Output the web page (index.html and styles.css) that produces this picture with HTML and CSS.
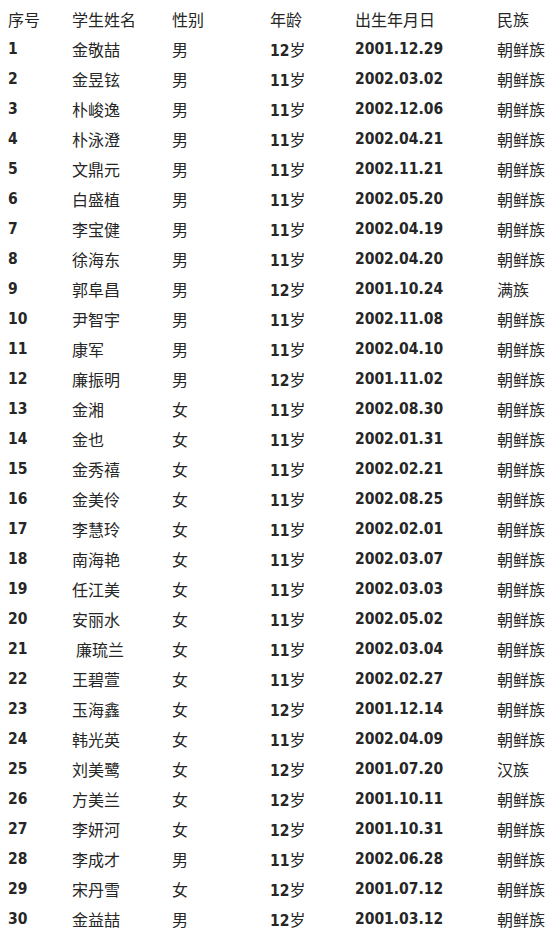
FILE: index.html
```html
<!DOCTYPE html>
<html lang="zh">
<head>
<meta charset="utf-8">
<link rel="stylesheet" href="styles.css">
</head>
<body>
<div class="table">
  <div class="row head"><span>序号</span><span>学生姓名</span><span>性别</span><span>年龄</span><span>出生年月日</span><span>民族</span></div>
  <div class="row"><b>1</b><span>金敬喆</span><span>男</span><span><b>12</b>岁</span><b>2001.12.29</b><span>朝鲜族</span></div>
  <div class="row"><b>2</b><span>金昱铉</span><span>男</span><span><b>11</b>岁</span><b>2002.03.02</b><span>朝鲜族</span></div>
  <div class="row"><b>3</b><span>朴峻逸</span><span>男</span><span><b>11</b>岁</span><b>2002.12.06</b><span>朝鲜族</span></div>
  <div class="row"><b>4</b><span>朴泳澄</span><span>男</span><span><b>11</b>岁</span><b>2002.04.21</b><span>朝鲜族</span></div>
  <div class="row"><b>5</b><span>文鼎元</span><span>男</span><span><b>11</b>岁</span><b>2002.11.21</b><span>朝鲜族</span></div>
  <div class="row"><b>6</b><span>白盛植</span><span>男</span><span><b>11</b>岁</span><b>2002.05.20</b><span>朝鲜族</span></div>
  <div class="row"><b>7</b><span>李宝健</span><span>男</span><span><b>11</b>岁</span><b>2002.04.19</b><span>朝鲜族</span></div>
  <div class="row"><b>8</b><span>徐海东</span><span>男</span><span><b>11</b>岁</span><b>2002.04.20</b><span>朝鲜族</span></div>
  <div class="row"><b>9</b><span>郭阜昌</span><span>男</span><span><b>12</b>岁</span><b>2001.10.24</b><span>满族</span></div>
  <div class="row"><b>10</b><span>尹智宇</span><span>男</span><span><b>11</b>岁</span><b>2002.11.08</b><span>朝鲜族</span></div>
  <div class="row"><b>11</b><span>康军</span><span>男</span><span><b>11</b>岁</span><b>2002.04.10</b><span>朝鲜族</span></div>
  <div class="row"><b>12</b><span>廉振明</span><span>男</span><span><b>12</b>岁</span><b>2001.11.02</b><span>朝鲜族</span></div>
  <div class="row"><b>13</b><span>金湘</span><span>女</span><span><b>11</b>岁</span><b>2002.08.30</b><span>朝鲜族</span></div>
  <div class="row"><b>14</b><span>金也</span><span>女</span><span><b>11</b>岁</span><b>2002.01.31</b><span>朝鲜族</span></div>
  <div class="row"><b>15</b><span>金秀禧</span><span>女</span><span><b>11</b>岁</span><b>2002.02.21</b><span>朝鲜族</span></div>
  <div class="row"><b>16</b><span>金美伶</span><span>女</span><span><b>11</b>岁</span><b>2002.08.25</b><span>朝鲜族</span></div>
  <div class="row"><b>17</b><span>李慧玲</span><span>女</span><span><b>11</b>岁</span><b>2002.02.01</b><span>朝鲜族</span></div>
  <div class="row"><b>18</b><span>南海艳</span><span>女</span><span><b>11</b>岁</span><b>2002.03.07</b><span>朝鲜族</span></div>
  <div class="row"><b>19</b><span>任江美</span><span>女</span><span><b>11</b>岁</span><b>2002.03.03</b><span>朝鲜族</span></div>
  <div class="row"><b>20</b><span>安丽水</span><span>女</span><span><b>11</b>岁</span><b>2002.05.02</b><span>朝鲜族</span></div>
  <div class="row"><b>21</b><span class="indent">廉琉兰</span><span>女</span><span><b>11</b>岁</span><b>2002.03.04</b><span>朝鲜族</span></div>
  <div class="row"><b>22</b><span>王碧萱</span><span>女</span><span><b>11</b>岁</span><b>2002.02.27</b><span>朝鲜族</span></div>
  <div class="row"><b>23</b><span>玉海鑫</span><span>女</span><span><b>12</b>岁</span><b>2001.12.14</b><span>朝鲜族</span></div>
  <div class="row"><b>24</b><span>韩光英</span><span>女</span><span><b>11</b>岁</span><b>2002.04.09</b><span>朝鲜族</span></div>
  <div class="row"><b>25</b><span>刘美鹭</span><span>女</span><span><b>12</b>岁</span><b>2001.07.20</b><span>汉族</span></div>
  <div class="row"><b>26</b><span>方美兰</span><span>女</span><span><b>12</b>岁</span><b>2001.10.11</b><span>朝鲜族</span></div>
  <div class="row"><b>27</b><span>李妍河</span><span>女</span><span><b>12</b>岁</span><b>2001.10.31</b><span>朝鲜族</span></div>
  <div class="row"><b>28</b><span>李成才</span><span>男</span><span><b>11</b>岁</span><b>2002.06.28</b><span>朝鲜族</span></div>
  <div class="row"><b>29</b><span>宋丹雪</span><span>女</span><span><b>12</b>岁</span><b>2001.07.12</b><span>朝鲜族</span></div>
  <div class="row"><b>30</b><span>金益喆</span><span>男</span><span><b>12</b>岁</span><b>2001.03.12</b><span>朝鲜族</span></div>
</div>
</body>
</html>
```
FILE: styles.css
```css
html, body {
  margin: 0;
  padding: 0;
  background: #ffffff;
}
body {
  padding: 4px 0 0 8px;
  font-family: "Noto Sans CJK SC", "Noto Sans", sans-serif;
  font-size: 16px;
  color: #262626;
}
.table {
  display: flex;
  flex-direction: column;
}
.row {
  display: grid;
  grid-template-columns: 64px 100px 98px 85px 142px auto;
  height: 30px;
  line-height: 30px;
  white-space: nowrap;
}
.row b {
  font-family: "DejaVu Sans Condensed", "DejaVu Sans", sans-serif;
  font-stretch: condensed;
  font-weight: bold;
  font-size: 15.5px;
}
.indent {
  padding-left: 4px;
}
```
